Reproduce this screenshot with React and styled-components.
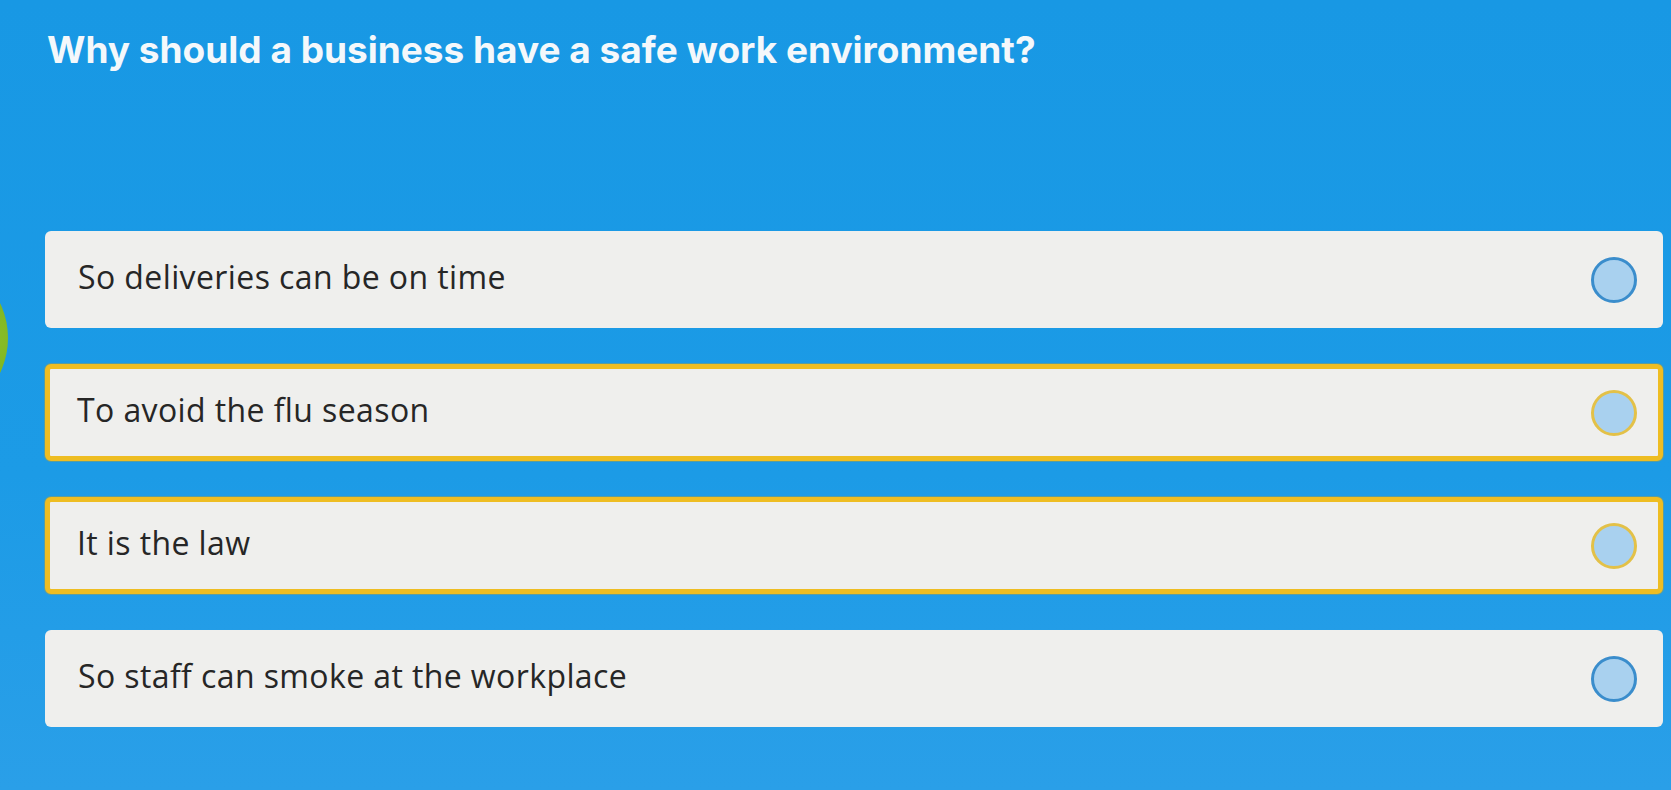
import React from "react";
import styled, { createGlobalStyle } from "styled-components";

const Global = createGlobalStyle`
  html, body { margin: 0; padding: 0; }
  body { background: #1b9ae5; overflow: hidden; }
`;

const Page = styled.main`
  position: relative;
  box-sizing: border-box;
  width: 1671px;
  height: 790px;
  padding: 27px 8px 0 45px;
  background: linear-gradient(180deg, #1898e4 0%, #1c9be6 60%, #2a9fe8 100%);
  overflow: hidden;
`;

const Title = styled.h1`
  margin: 0 0 0 2px;
  font-family: Inter, "Noto Sans", sans-serif;
  font-weight: 700;
  font-size: 37px;
  line-height: 46px;
  letter-spacing: 0;
  color: #f4f8fb;
`;

const Options = styled.div`
  position: relative;
  display: flex;
  flex-direction: column;
  gap: 36px;
  margin-top: 158px;
`;

const Option = styled.div`
  box-sizing: border-box;
  height: 97px;
  display: flex;
  align-items: center;
  justify-content: space-between;
  padding: 0 21px 0 28px;
  background: #efefed;
  border: 5px solid ${(p) => (p.$marked ? "#eebd22" : "transparent")};
  border-radius: 6px;
  box-shadow: ${(p) => (p.$marked ? "0 0 0 1px rgba(210,160,20,0.35)" : "none")};
`;

const Label = styled.span`
  font-family: "Open Sans", "Noto Sans", sans-serif;
  font-size: 32px;
  letter-spacing: 0.4px;
  color: #262626;
  margin-top: -6px;
  margin-left: ${(p) => (p.$marked ? "-1px" : "0")};
`;

const Radio = styled.span`
  box-sizing: border-box;
  width: 46px;
  height: 46px;
  border-radius: 50%;
  background: #a9d1ef;
  border: ${(p) => (p.$marked ? "3px solid #e3c148" : "3px solid #3a8dcc")};
  flex-shrink: 0;
`;

const Blob = styled.div`
  position: absolute;
  left: -154px;
  top: 257px;
  width: 162px;
  height: 162px;
  border-radius: 50%;
  background: radial-gradient(circle at 85% 50%, #8cc02a 0%, #6fa815 60%, #5b9310 100%);
`;

const options = [
  { text: "So deliveries can be on time", marked: false },
  { text: "To avoid the flu season", marked: true },
  { text: "It is the law", marked: true },
  { text: "So staff can smoke at the workplace", marked: false },
];

export default function App() {
  return (
    <>
      <Global />
      <Page>
        <Blob />
        <Title>Why should a business have a safe work environment?</Title>
        <Options>
          {options.map((o) => (
            <Option key={o.text} $marked={o.marked}>
              <Label $marked={o.marked}>{o.text}</Label>
              <Radio $marked={o.marked} />
            </Option>
          ))}
        </Options>
      </Page>
    </>
  );
}
